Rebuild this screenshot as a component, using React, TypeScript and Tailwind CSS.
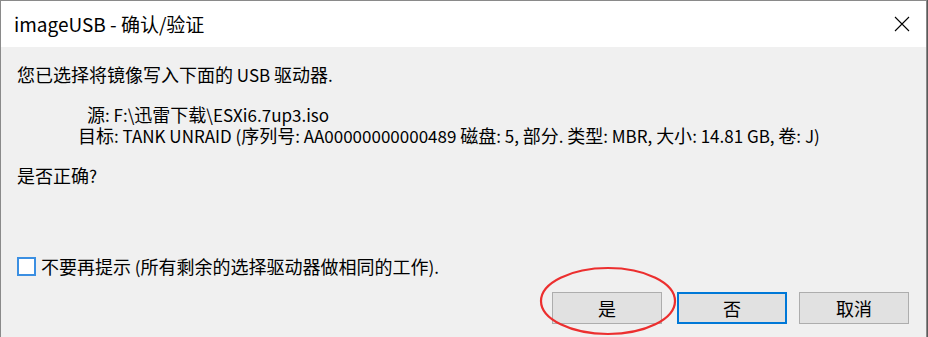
import React from "react";

const uiFont = { fontFamily: '"Noto Sans CJK SC", "Noto Sans", sans-serif' };

function CloseIcon() {
  return (
    <svg width="16" height="16" viewBox="0 0 16 16" className="block">
      <path d="M1 1 L15 15 M15 1 L1 15" stroke="#000" strokeWidth="1.1" fill="none" />
    </svg>
  );
}

// latin runs render a touch smaller than the CJK glyphs, like YaHei UI
function L({ children }: { children: React.ReactNode }) {
  return <span className="text-[17px]">{children}</span>;
}

export default function App() {
  return (
    <div className="w-[928px] h-[337px] overflow-hidden bg-[#5a5a5a] relative" style={uiFont}>
      <div className="w-[927px] h-[337px] flex flex-col border-l border-t border-r border-[#8a8a8a] bg-[#f0f0f0]">
        {/* title bar */}
        <div className="h-[46px] shrink-0 bg-white flex items-center justify-between pl-[13px] pr-[16px]">
          <span className="text-[19px] leading-[26px] text-black">imageUSB - 确认/验证</span>
          <CloseIcon />
        </div>

        {/* body */}
        <div className="flex-1 flex flex-col pl-[16px] pr-[17px] pt-[15px] text-[18px] text-black">
          <p className="leading-[24px]">
            您已选择将镜像写入下面的<L> USB </L>驱动器<L>.</L>
          </p>
          <p className="leading-[20px] mt-[17px] pl-[70px]">
            源<L>: F:\</L>迅雷下载<L>\ESXi6.7up3.iso</L>
          </p>
          <p className="leading-[20px] pl-[61px]">
            目标<L>: TANK UNRAID (</L>序列号<L>: AA00000000000489 </L>磁盘<L>: 5, </L>部分<L>. </L>类型
            <L>: MBR, </L>大小<L>: 14.81 GB, </L>卷<L>: J)</L>
          </p>
          <p className="leading-[24px] mt-[17px]">
            是否正确<L>?</L>
          </p>

          <label className="flex items-center gap-[5px] mt-[66px] leading-[24px]">
            <span className="w-[19px] h-[19px] border-2 border-[#3b8fe2] bg-white shrink-0" />
            <span>
              不要再提示<L> (</L>所有剩余的选择驱动器做相同的工作<L>).</L>
            </span>
          </label>

          <div className="flex justify-end mt-[13px]">
            <button className="w-[110px] h-[32px] bg-[#e1e1e1] border border-[#adadad] text-[18px] leading-none">是</button>
            <button className="w-[110px] h-[32px] ml-[15px] bg-[#e1e1e1] border-2 border-[#0078d7] text-[18px] leading-none">否</button>
            <button className="w-[110px] h-[32px] ml-[12px] bg-[#e1e1e1] border border-[#adadad] text-[18px] leading-none">取消</button>
          </div>
        </div>
      </div>

      {/* red annotation ring */}
      <svg className="absolute left-[539px] top-[266px] pointer-events-none" width="138" height="70" viewBox="0 0 138 70">
        <ellipse cx="69" cy="35" rx="67" ry="33" fill="none" stroke="#ec2f2f" strokeWidth="2.2" />
      </svg>
    </div>
  );
}
